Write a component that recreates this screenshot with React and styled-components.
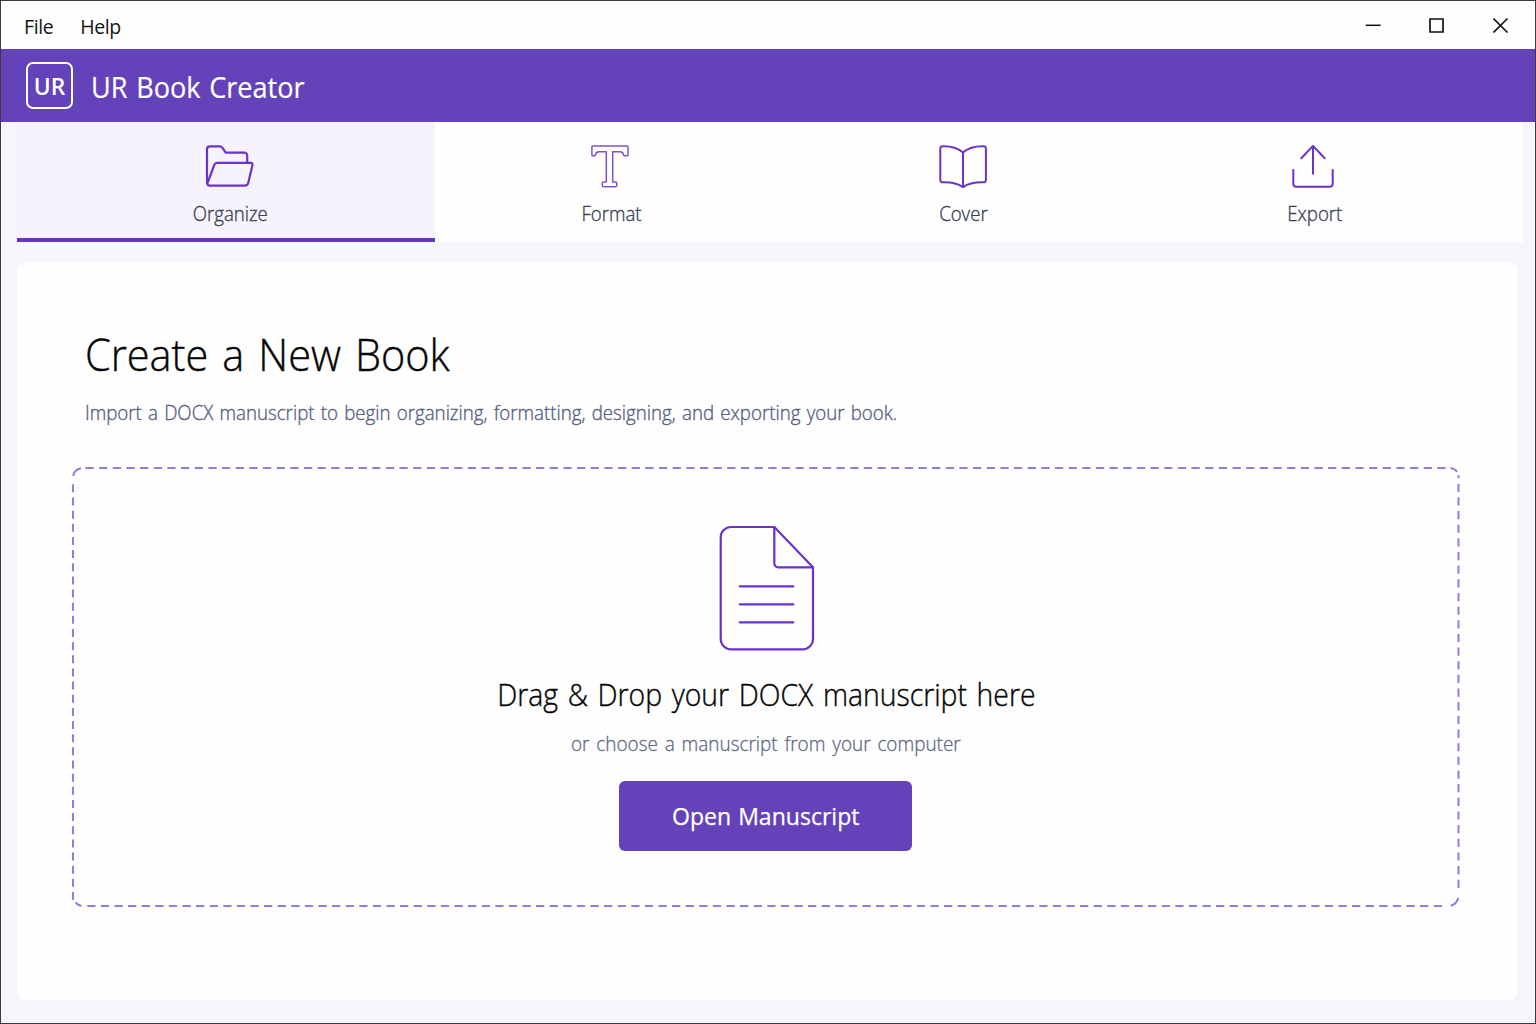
import React from 'react';
import styled, { createGlobalStyle } from 'styled-components';

const GlobalStyle = createGlobalStyle`
    * {
        box-sizing: border-box;
    }

    body {
        margin: 0;
        font-family: 'Open Sans', 'Noto Sans', sans-serif;
        background: #f7f5fc;
    }
`;

const Window = styled.div`
    width: 100%;
    height: 100vh;
    display: flex;
    flex-direction: column;
    overflow: hidden;
    border: 1px solid #3b393f;
    background: #f7f5fc;
`;

const MenuBar = styled.div`
    height: 48px;
    flex-shrink: 0;
    display: flex;
    justify-content: space-between;
    align-items: center;
    padding: 2px 26px 0 23px;
    background: #fefefe;
`;

const Menu = styled.div`
    display: flex;
    gap: 27px;
    padding-top: 1px;
`;

const MenuItem = styled.span`
    font-size: 19.5px;
    line-height: 26px;
    letter-spacing: -0.4px;
    color: #151515;
`;

const Controls = styled.div`
    display: flex;
    gap: 48px;
    margin-top: -2px;

    svg {
        display: block;
    }
`;

const Header = styled.header`
    height: 73px;
    flex-shrink: 0;
    display: flex;
    align-items: center;
    gap: 18px;
    padding: 0 25px;
    background: #6342ba;
    color: #fff;
`;

const Logo = styled.div`
    width: 47px;
    height: 47px;
    display: flex;
    justify-content: center;
    align-items: center;
    border: 2px solid #fff;
    border-radius: 7px;
    font-size: 24px;
    font-weight: 600;

    span {
        transform: scaleX(0.95);
    }
`;

const AppName = styled.h1`
    margin: 2px 0 0;
    font-size: 28.5px;
    font-weight: 400;
    line-height: 40px;
    word-spacing: 1.8px;
    transform: scaleX(0.95);
    transform-origin: left;
    -webkit-text-stroke: 0.2px #fff;
`;

const Tabs = styled.nav`
    height: 120px;
    flex-shrink: 0;
    display: grid;
    grid-template-columns: 418px repeat(3, 1fr);
    margin: 0 12px 0 16px;
    padding-right: 32px;
    background: #fefefe;
`;

const Tab = styled.button`
    display: flex;
    flex-direction: column;
    align-items: center;
    padding: 22px 0 0 ${(props) => (props.$active ? '8px' : '0')};
    border: 0;
    border-bottom: 4px solid ${(props) => (props.$active ? '#6733c2' : 'transparent')};
    background: ${(props) => (props.$active ? '#f6f3fd' : 'transparent')};
    font-family: inherit;
`;

const TabIcon = styled.svg`
    width: 50px;
    height: 44px;
    flex-shrink: 0;
    margin-right: ${(props) => props.$shift || 0}px;
    fill: none;
    stroke: ${(props) => props.$color || '#6a33cc'};
    stroke-width: ${(props) => props.$stroke || 2}px;
    stroke-linecap: round;
    stroke-linejoin: round;
`;

const TabLabel = styled.span`
    margin-top: 13px;
    font-size: 19.5px;
    font-weight: 300;
    line-height: 26px;
    color: #3a3f55;
    transform: scaleX(0.955);
    -webkit-text-stroke: 0.35px #3a3f55;
`;

const Panel = styled.main`
    height: 738px;
    flex-shrink: 0;
    margin: 20px 17px 0 16px;
    padding: 62px 58px 0 55px;
    border-radius: 9px;
    background: #fefefe;
`;

const Title = styled.h2`
    width: max-content;
    margin: 0 0 15px 13px;
    font-size: 44px;
    font-weight: 300;
    line-height: 60px;
    word-spacing: 3.5px;
    color: #060606;
    transform: scaleX(0.942);
    transform-origin: left;
    -webkit-text-stroke: 0.4px #060606;
`;

const Subtitle = styled.p`
    width: max-content;
    margin: 0 0 40px 13px;
    font-size: 19.5px;
    font-weight: 300;
    line-height: 28px;
    word-spacing: 1.4px;
    color: #566080;
    transform: scaleX(0.959);
    transform-origin: left;
    -webkit-text-stroke: 0.35px #566080;
`;

const DropZone = styled.section`
    position: relative;
    width: 1388px;
    height: 440px;
    display: flex;
    flex-direction: column;
    align-items: center;
    padding-top: 58px;
`;

const DashedOutline = styled.svg`
    position: absolute;
    inset: 0;
    width: 100%;
    height: 100%;
    fill: none;
    stroke: #9877e6;
    stroke-width: 2px;
    pointer-events: none;
`;

const DocumentIcon = styled.svg`
    width: 96px;
    height: 126px;
    flex-shrink: 0;
    margin-left: 2px;
    fill: none;
    stroke: #6a31cb;
    stroke-width: 2.2px;
    stroke-linecap: round;
    stroke-linejoin: round;
`;

const DropTitle = styled.p`
    margin: 22px 0 15px 1px;
    font-size: 30.5px;
    font-weight: 300;
    line-height: 42px;
    word-spacing: 2.4px;
    color: #060606;
    transform: scaleX(0.93);
    -webkit-text-stroke: 0.4px #060606;
`;

const DropHint = styled.p`
    margin: 0 1px 23px 0;
    font-size: 19.5px;
    font-weight: 300;
    line-height: 28px;
    word-spacing: 2px;
    color: #606886;
    transform: scaleX(0.97);
    -webkit-text-stroke: 0.3px #606886;
`;

const OpenButton = styled.button`
    width: 293px;
    height: 70px;
    margin-right: 2px;
    padding: 0 0 1px 1px;
    border: 0;
    border-radius: 6px;
    background: #6342ba;
    color: #fff;
    font-family: inherit;
    font-size: 24.5px;
    word-spacing: 1.2px;
    -webkit-text-stroke: 0.25px #fff;

    span {
        display: inline-block;
        transform: scaleX(0.94);
    }
`;

function FolderIcon() {
    return (
        <TabIcon viewBox="204 144 50 44" $stroke={2.2} $shift={1.5}>
            <path d="M207 183V149.3a3 3 0 0 1 3-3h9.8a3 3 0 0 1 2.5 1.4l3.4 5h18.8a2.7 2.7 0 0 1 2.7 2.7v7" />
            <path d="M207.3 183.5l7-18.6a3 3 0 0 1 2.8-2h33.6a1.8 1.8 0 0 1 1.8 2.2l-4.3 18a3.4 3.4 0 0 1-3.3 2.6H209.7a2.6 2.6 0 0 1-2.4-2.2z" />
        </TabIcon>
    );
}

function FormatIcon() {
    return (
        <TabIcon viewBox="585 144 50 44" $stroke={1.5} $color="#7a50dc" $shift={3}>
            <path d="M593 146h33.9a1.1 1.1 0 0 1 1.1 1.1v7.6a1.1 1.1 0 0 1-1.1 1.1h-2.1a1.3 1.3 0 0 1-1.2-1c-.5-2.3-1.4-3.1-3.4-3.1h-7.5V182h2.8a1.2 1.2 0 0 1 1.2 1.2v2.3a1.2 1.2 0 0 1-1.2 1.2h-12a1.2 1.2 0 0 1-1.2-1.2v-2.3a1.2 1.2 0 0 1 1.2-1.2h2.8v-30.3h-7.5c-2 0-2.9.8-3.4 3.1a1.3 1.3 0 0 1-1.2 1H593a1.1 1.1 0 0 1-1.1-1.1v-7.6a1.1 1.1 0 0 1 1.1-1.1z" />
        </TabIcon>
    );
}

function BookIcon() {
    return (
        <TabIcon viewBox="938.4 144 50 44">
            <path d="M963.4 152.4c-5.5-4.6-12.5-6.4-20.3-6.2a2.4 2.4 0 0 0-2.4 2.4v31.4a2.3 2.3 0 0 0 2.4 2.3c8.2-.3 14.4.8 20.3 4.8c5.9-4 12.1-5.1 20.5-4.8a2.3 2.3 0 0 0 2.4-2.3V148.6a2.4 2.4 0 0 0-2.4-2.4c-7.9-.2-15 1.6-20.5 6.2z" />
            <path d="M963.4 152.4v34.7" />
        </TabIcon>
    );
}

function ExportIcon() {
    return (
        <TabIcon viewBox="1288 144 50 44" $shift={4.5}>
            <path d="M1313 173.7V146M1301.3 158.3L1313 145.9l11.7 12.4" />
            <path d="M1293.3 170v13.7a3 3 0 0 0 3 3h33.4a3 3 0 0 0 3-3V170" />
        </TabIcon>
    );
}

const tabs = [
    { label: 'Organize', icon: <FolderIcon /> },
    { label: 'Format', icon: <FormatIcon /> },
    { label: 'Cover', icon: <BookIcon /> },
    { label: 'Export', icon: <ExportIcon /> },
];

export default function App() {
    return (
        <Window>
            <GlobalStyle />
            <MenuBar>
                <Menu>
                    <MenuItem>File</MenuItem>
                    <MenuItem>Help</MenuItem>
                </Menu>
                <Controls>
                    <svg width="16" height="16" fill="none" stroke="#111" strokeWidth="1.5">
                        <path d="M0.7 8.3h15" />
                    </svg>
                    <svg width="16" height="16" fill="none" stroke="#111" strokeWidth="1.7">
                        <path d="M1 2h13v13H1z" />
                    </svg>
                    <svg width="16" height="16" fill="none" stroke="#111" strokeWidth="1.6">
                        <path d="M0.5 1.5l14 14M14.5 1.5l-14 14" />
                    </svg>
                </Controls>
            </MenuBar>
            <Header>
                <Logo>
                    <span>UR</span>
                </Logo>
                <AppName>UR Book Creator</AppName>
            </Header>
            <Tabs>
                {tabs.map((tab, index) => (
                    <Tab key={tab.label} $active={index === 0}>
                        {tab.icon}
                        <TabLabel>{tab.label}</TabLabel>
                    </Tab>
                ))}
            </Tabs>
            <Panel>
                <Title>Create a New Book</Title>
                <Subtitle>Import a DOCX manuscript to begin organizing, formatting, designing, and exporting your book.</Subtitle>
                <DropZone>
                    <DashedOutline viewBox="0 0 1388 440">
                        <path d="M13.5 1H1374" strokeDasharray="8.2 5.455" />
                        <path d="M1386.5 16.7V424" strokeDasharray="8.2 5.455" />
                        <path d="M15.3 439H1374" strokeDasharray="8.2 5.4" />
                        <path d="M1 433V14" strokeDasharray="8 5.15" />
                        {/* rounded corners */}
                        <path d="M1.3 9C1.8 5 4.5 2.2 9 1.3M1378.5 1.1c3 .3 5 1.5 6.7 3.5M1386.5 8.3v3M1386.2 431c-.9 4-3.5 6.8-7.6 7.7M3.5 435.5c1.5 1.7 3.5 2.8 6 3.4" />
                    </DashedOutline>
                    <DocumentIcon viewBox="719 525 96 126">
                        <path d="M774.3 527H731a10.3 10.3 0 0 0-10.3 10.3V639a10.3 10.3 0 0 0 10.3 10.3h71.7A10.3 10.3 0 0 0 813 639V567.3z" />
                        <path d="M774.3 527v36.3a4 4 0 0 0 4 4H813" />
                        <path d="M739.8 586.3h53.5M739.8 604.3h53.5M739.8 622.3h53.5" />
                    </DocumentIcon>
                    <DropTitle>Drag &amp; Drop your DOCX manuscript here</DropTitle>
                    <DropHint>or choose a manuscript from your computer</DropHint>
                    <OpenButton>
                        <span>Open Manuscript</span>
                    </OpenButton>
                </DropZone>
            </Panel>
        </Window>
    );
}
